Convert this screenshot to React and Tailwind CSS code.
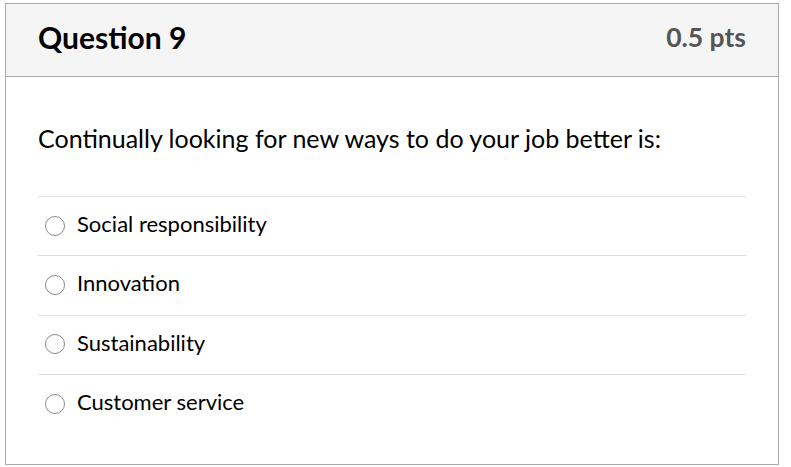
import React from "react";

const options = [
  "Social responsibility",
  "Innovation",
  "Sustainability",
  "Customer service",
];

export default function App() {
  return (
    <div className="w-[791px] h-[467px] bg-white pt-[3px] pl-[5px] font-['Lato','Liberation_Sans',sans-serif] text-black">
      <div className="w-[774px] h-[462px] border border-[#aaaaaa] flex flex-col">
        <div className="h-[73px] shrink-0 bg-[#f5f5f5] border-b border-[#aaaaaa] flex items-center justify-between pl-[32px] pr-[32px] pb-[6px]">
          <h2 className="text-[30px] font-bold leading-none">Question 9</h2>
          <span className="text-[26.5px] font-bold text-[#555555] leading-none">0.5 pts</span>
        </div>
        <div className="px-[32px] pt-[45px]">
          <p className="text-[25px] leading-[33px] mb-[41px]">
            Continually looking for new ways to do your job better is:
          </p>
          {options.map((opt) => (
            <label
              key={opt}
              className="h-[59.3px] border-t border-[#dddddd] flex items-center pb-[4px]"
            >
              <span className="ml-[7px] w-[20px] h-[20px] rounded-full border border-[#8a8a8a] bg-white shrink-0 mt-[3px]"></span>
              <span className="ml-[12px] text-[22px] leading-none">{opt}</span>
            </label>
          ))}
        </div>
      </div>
    </div>
  );
}
